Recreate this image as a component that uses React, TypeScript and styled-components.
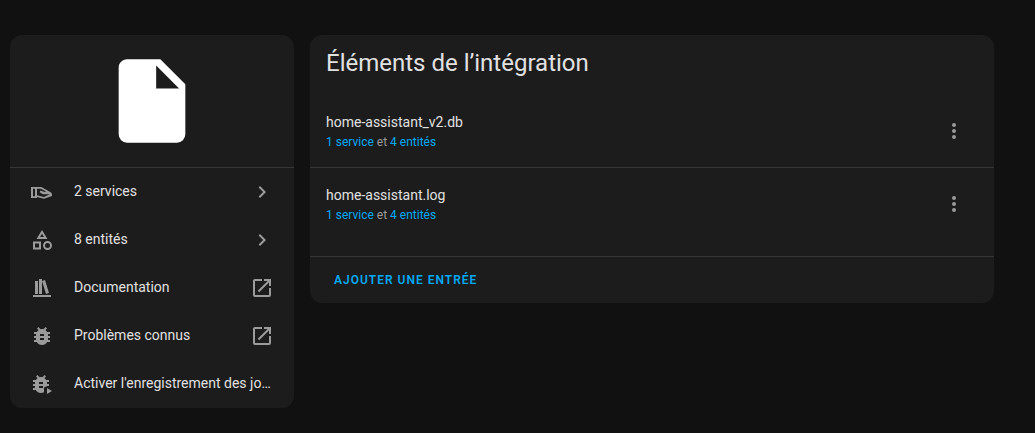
import React from "react";
import styled, { createGlobalStyle } from "styled-components";

const GlobalStyle = createGlobalStyle`
  * { box-sizing: border-box; }
  body {
    margin: 0;
    background: #111111;
    color: #e1e1e1;
    font-family: Roboto, "Noto Sans", sans-serif;
    font-size: 14px;
    line-height: 20px;
  }
`;

const icons = {
  file: "M13,9V3.5L18.5,9M6,2C4.89,2 4,2.89 4,4V20A2,2 0 0,0 6,22H18A2,2 0 0,0 20,20V8L14,2H6Z",
  shapes:
    "M11,13.5V21.5H3V13.5H11M9,15.5H5V19.5H9V15.5M12,2L17.5,11H6.5L12,2M12,5.86L10.08,9H13.92L12,5.86M17.5,13C20,13 22,15 22,17.5C22,20 20,22 17.5,22C15,22 13,20 13,17.5C13,15 15,13 17.5,13M17.5,15A2.5,2.5 0 0,0 15,17.5A2.5,2.5 0 0,0 17.5,20A2.5,2.5 0 0,0 20,17.5A2.5,2.5 0 0,0 17.5,15Z",
  hand: "M20.6 12.2L11.8 7.2C11.5 7 11.2 7 10.8 7H1V18H7V17L14 18.7L22 16V15C22 13.6 21.6 12.8 20.6 12.2M3 16.3V8.7H5V16.3H3M14 17L7 15.2V8.7H10.9L16 11.6L14.8 11.9L10.3 10.6L9.7 12.3L12.4 13.9C12.9 14.2 13.4 14.3 14 14.3H19.8L14 17Z",
  books: "M9 3V18H12V3H9M12 5L16 18L19 17L15 4L12 5M5 5V18H8V5H5M3 19V21H21V19H3Z",
  bug: "M14,12H10V10H14M14,16H10V14H14M20,8H17.19C16.74,7.22 16.12,6.55 15.37,6.04L17,4.41L15.59,3L13.42,5.17C12.96,5.06 12.5,5 12,5C11.5,5 11.04,5.06 10.59,5.17L8.41,3L7,4.41L8.62,6.04C7.88,6.55 7.26,7.22 6.81,8H4V10H6.09C6.04,10.33 6,10.66 6,11V12H4V14H6V15C6,15.34 6.04,15.67 6.09,16H4V18H6.81C7.85,19.79 9.78,21 12,21C14.22,21 16.15,19.79 17.19,18H20V16H17.91C17.96,15.67 18,15.34 18,15V14H20V12H18V11C18,10.66 17.96,10.33 17.91,10H20V8Z",
  bugPlay:
    "M13,12H9V10H13M13,16H9V14H13M19,8H16.19C15.74,7.22 15.12,6.55 14.37,6.04L16,4.41L14.59,3L12.42,5.17C11.96,5.06 11.5,5 11,5C10.5,5 10.04,5.06 9.59,5.17L7.41,3L6,4.41L7.62,6.04C6.88,6.55 6.26,7.22 5.81,8H3V10H5.09C5.04,10.33 5,10.66 5,11V12H3V14H5V15C5,15.34 5.04,15.67 5.09,16H3V18H5.81C6.85,19.79 8.78,21 11,21C12.1,21 13.1,20.7 14,20.2V15.5L16,14.5H17V14H19V12H17V11C17,10.66 16.96,10.33 16.91,10H19V8M17,16V22L22,19L17,16Z",
  chevron: "M8.59,16.58L13.17,12L8.59,7.41L10,6L16,12L10,18L8.59,16.58Z",
  open: "M14,3V5H17.59L7.76,14.83L9.17,16.24L19,6.41V10H21V3M19,19H5V5H12V3H5C3.89,3 3,3.9 3,5V19A2,2 0 0,0 5,21H19A2,2 0 0,0 21,19V12H19V19Z",
  dots: "M12,16A2,2 0 0,1 14,18A2,2 0 0,1 12,20A2,2 0 0,1 10,18A2,2 0 0,1 12,16M12,10A2,2 0 0,1 14,12A2,2 0 0,1 12,14A2,2 0 0,1 10,12A2,2 0 0,1 12,10M12,4A2,2 0 0,1 14,6A2,2 0 0,1 12,8A2,2 0 0,1 10,6A2,2 0 0,1 12,4Z",
};

type IconName = keyof typeof icons;

const Glyph = styled.svg<{ $size: number }>`
  display: block;
  flex: none;
  width: ${(p) => p.$size}px;
  height: ${(p) => p.$size}px;
  fill: currentColor;
`;

const Icon = ({ name, size = 24 }: { name: IconName; size?: number }) => (
  <Glyph viewBox="0 0 24 24" $size={size} aria-hidden="true">
    <path fillRule="evenodd" d={icons[name]} />
  </Glyph>
);

const Page = styled.main`
  display: grid;
  grid-template-columns: minmax(0, 71fr) minmax(0, 171fr);
  align-items: start;
  gap: 16px;
  padding: 35px 41px 25px 10px;
`;

const Card = styled.section`
  overflow: hidden;
  border-radius: 12px;
  background: #1c1c1c;
`;

const Logo = styled.div`
  display: flex;
  justify-content: center;
  padding: 16px;
  color: #ffffff;
  border-bottom: 1px solid #363636;
`;

const Nav = styled.nav`
  display: flex;
  flex-direction: column;
`;

const NavLink = styled.a`
  display: flex;
  align-items: center;
  height: 48px;
  padding: 0 20px;
  color: #9b9b9b;
  text-decoration: none;
`;

const NavLabel = styled.span`
  flex: 1;
  min-width: 0;
  margin-left: 20px;
  padding: 0 0 2px;
  overflow: hidden;
  color: #e1e1e1;
  text-overflow: ellipsis;
  white-space: nowrap;
`;

const Title = styled.h1`
  margin: 0;
  padding: 12px 16px 15px;
  font-size: 24px;
  font-weight: 400;
  line-height: 32px;
`;

const Entries = styled.ul`
  margin: 0;
  padding: 0 0 16px;
  list-style: none;
`;

const Entry = styled.li`
  display: flex;
  align-items: center;
  justify-content: space-between;
  height: 73px;
  padding: 0 16px;

  & + & {
    border-top: 1px solid #363636;
  }
`;

const EntryText = styled.div`
  padding-top: 2px;
`;

const EntryName = styled.div`
  line-height: 20px;
`;

const EntryMeta = styled.div`
  color: #9b9b9b;
  font-size: 12px;
  line-height: 20px;
`;

const Link = styled.a`
  color: #03a9f4;
  text-decoration: none;
`;

const MenuButton = styled.button`
  display: grid;
  place-items: center;
  width: 48px;
  height: 48px;
  padding: 0;
  border: 0;
  background: none;
  color: #9b9b9b;
`;

const Footer = styled.footer`
  padding: 5px 16px;
  border-top: 1px solid #363636;
`;

const AddButton = styled.button`
  display: block;
  height: 36px;
  padding: 0 8px;
  border: 0;
  background: none;
  color: #03a9f4;
  font-family: inherit;
  font-size: 12px;
  font-weight: 600;
  letter-spacing: 1px;
  text-transform: uppercase;
`;

const links: { icon: IconName; label: string; trailing?: IconName }[] = [
  { icon: "hand", label: "2 services", trailing: "chevron" },
  { icon: "shapes", label: "8 entités", trailing: "chevron" },
  { icon: "books", label: "Documentation", trailing: "open" },
  { icon: "bug", label: "Problèmes connus", trailing: "open" },
  { icon: "bugPlay", label: "Activer l'enregistrement des journaux de débogage" },
];

const entries = ["home-assistant_v2.db", "home-assistant.log"];

export default function App() {
  return (
    <>
      <GlobalStyle />
      <Page>
        <Card>
          <Logo>
            <Icon name="file" size={100} />
          </Logo>
          <Nav>
            {links.map(({ icon, label, trailing }) => (
              <NavLink href="#" key={label}>
                <Icon name={icon} />
                <NavLabel>{label}</NavLabel>
                {trailing && <Icon name={trailing} />}
              </NavLink>
            ))}
          </Nav>
        </Card>
        <Card>
          <Title>Éléments de l’intégration</Title>
          <Entries>
            {entries.map((name) => (
              <Entry key={name}>
                <EntryText>
                  <EntryName>{name}</EntryName>
                  <EntryMeta>
                    <Link href="#">1 service</Link> et <Link href="#">4 entités</Link>
                  </EntryMeta>
                </EntryText>
                <MenuButton type="button" aria-label="Menu">
                  <Icon name="dots" />
                </MenuButton>
              </Entry>
            ))}
          </Entries>
          <Footer>
            <AddButton type="button">Ajouter une entrée</AddButton>
          </Footer>
        </Card>
      </Page>
    </>
  );
}
